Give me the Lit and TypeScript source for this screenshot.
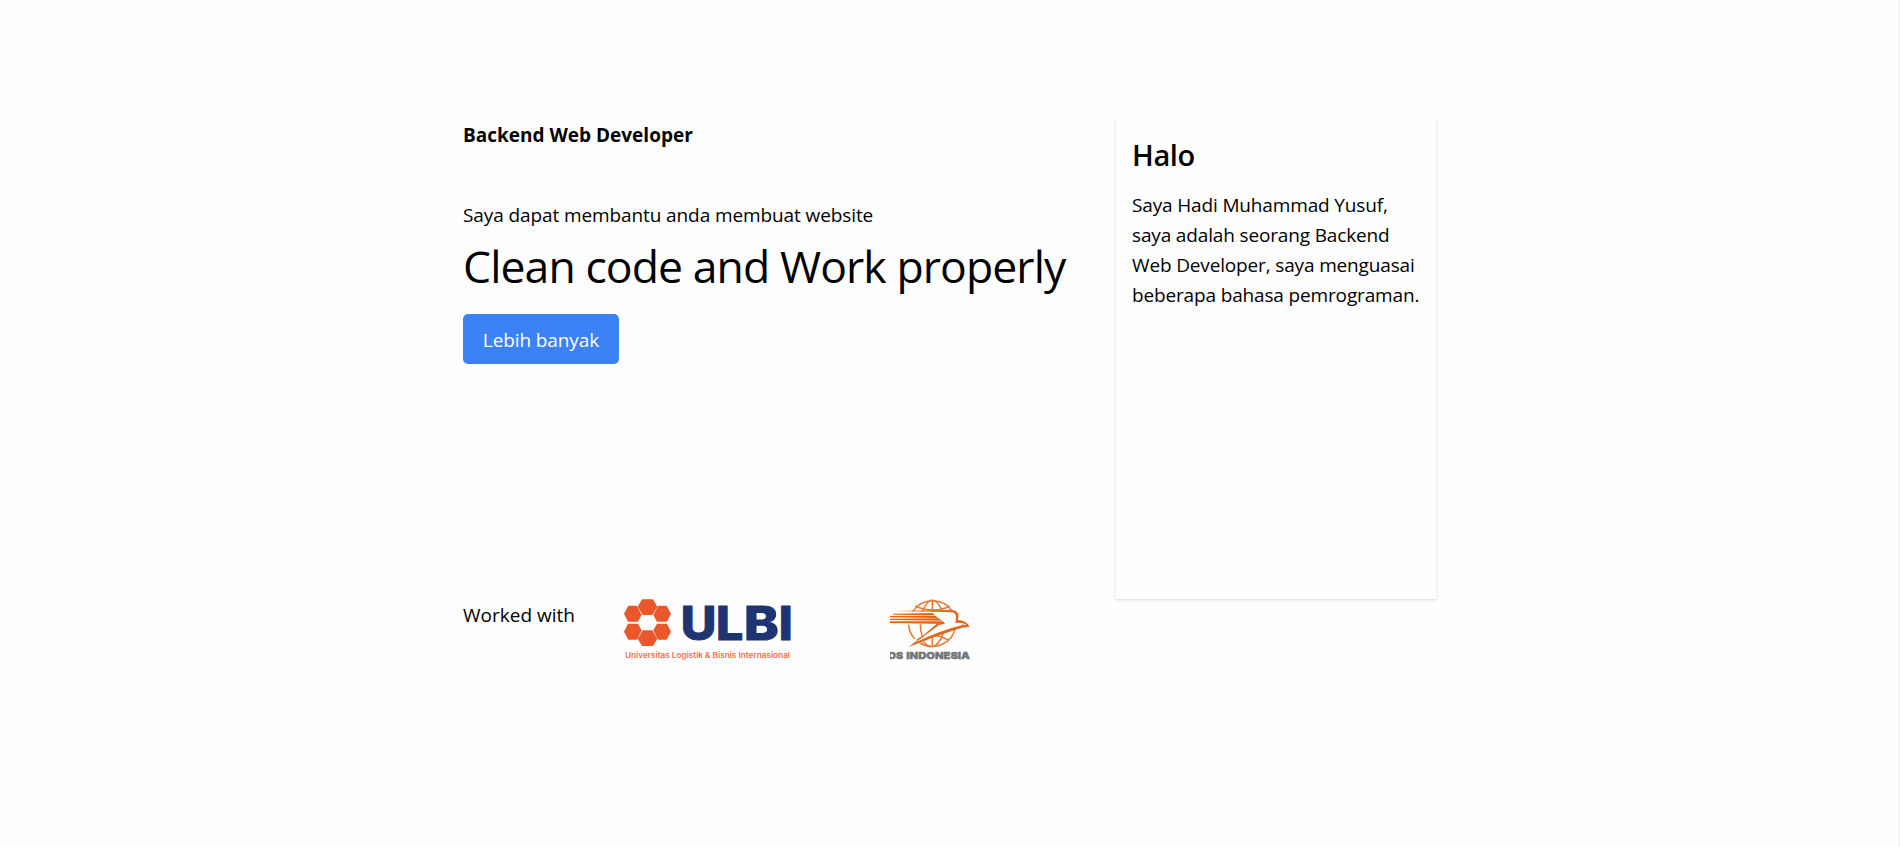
import { LitElement, html, css, svg } from "lit";
import { customElement } from "lit/decorators.js";

const PETALS = [
  "M60 7H93L106 29L91 54H62L47 29Z",
  "M62 100H91L106 125L93 147H60L47 125Z",
  "M6 50L19 26H45L59 54L48 74H18Z",
  "M147 50L134 26H108L94 54L105 74H135Z",
  "M6 104L19 128H45L59 100L48 80H18Z",
  "M147 104L134 128H108L94 100L105 80H135Z",
];

@customElement("brand-logos")
class BrandLogos extends LitElement {
  static styles = css`
    :host { display: flex; letter-spacing: 0; }
    .ulbi { display: block; width: 180px; height: 70px; overflow: visible; }
    .pos { display: block; width: 80px; height: 70px; margin-left: 90px; }
    .word { font: 800 46.5px Inter, sans-serif; fill: #1f3572; stroke: #1f3572; stroke-width: 1; stroke-linejoin: round; }
    .tag { font: 600 7.4px Inter, sans-serif; fill: #ee6f47; }
    .post { font: 900 28.5px Inter, sans-serif; fill: #737476; stroke: #737476; stroke-width: 1; }
  `;
  render() {
    return html`
      <svg class="ulbi" viewBox="620 599 180 70">
        <g transform="translate(622 597) scale(.33333)" fill="#e9572b">
          ${PETALS.map((d) => svg`<path d=${d}/>`)}
        </g>
        <g class="word">
          <text x="680.8" y="639.5" textLength="35.6" lengthAdjust="spacingAndGlyphs">U</text>
          <text x="716" y="639.5" textLength="27.3" lengthAdjust="spacingAndGlyphs">L</text>
          <text x="744" y="639.5" textLength="34.8" lengthAdjust="spacingAndGlyphs">B</text>
          <text x="778.8" y="639.5" textLength="14" lengthAdjust="spacingAndGlyphs">I</text>
        </g>
        <text class="tag" x="625" y="657.7" textLength="165" lengthAdjust="spacingAndGlyphs">Universitas Logistik &amp; Bisnis Internasional</text>
      </svg>
      <svg class="pos" viewBox="60 42 240 210">
        <g fill="none" stroke="#e57a35" stroke-width="4.5">
          <path d="M128 80A71 71 0 0 1 248 80M257 124A71 71 0 0 1 150 174M134 162A71 71 0 0 1 116 119"/>
          <path d="M187 43V79M187 155V185M157 79Q165 58 182 45M217 79Q209 58 192 45M151 118Q151 140 157 154M160 169Q169 182 182 185M221 133Q219 164 192 185M136 63Q160 75 187 75Q220 75 239 63M140 165Q187 138 234 165"/>
        </g>
        <path fill="#fefefe" d="M80 80H248Q264 84 263 96L262 108Q286 106 296 123L276 126Q220 139 121 183L214 117L60 114Z"/>
        <g fill="#e0661c">
          <path d="M78 78L250 75Q269 81 265 98L263 105Q286 104 299 125L277 128Q215 146 116 186L153 157L204 113L221 110L224 117L208 119L137 172Q215 135 275 121L289 120Q279 111 256 114Q260 96 256 88Q252 82 246 82Z"/>
          <path d="M69 86L188 84L195 91L69 89Z"/>
          <path d="M60 93L196 92L205 99L60 97Z"/>
          <path d="M60 101L207 100L216 107L60 105Z"/>
          <path d="M60 109L217 109L225 117L60 114Z"/>
        </g>
        <path d="M276 119L282 121" stroke="#e0661c" stroke-width="3"/>
        <text class="post" x="32" y="221" textLength="67" lengthAdjust="spacingAndGlyphs">POS</text>
        <text class="post" x="109" y="221" textLength="191" lengthAdjust="spacingAndGlyphs">INDONESIA</text>
      </svg>`;
  }
}

@customElement("app-root")
class AppRoot extends LitElement {
  static styles = css`
    :host {
      display: block; box-sizing: border-box; height: 847px; padding-top: 119px;
      border-right: 1px solid #ededed; background: #fefefe; color: #000;
      font: 19px/30px "Open Sans", "Noto Sans", sans-serif; letter-spacing: -.1px;
    }
    h1, h2, h3, p { margin: 0; font-weight: 400; white-space: nowrap; }
    .page { width: 973px; margin: 0 auto; }
    .hero { display: grid; grid-template-columns: 1fr 320px; height: 480px; }
    .intro { display: flex; flex-direction: column; align-items: flex-start; }
    .role { font-size: 19px; font-weight: 700; padding-top: 1px; letter-spacing: 0; }
    .lead { margin-top: 50px; }
    .title { font-size: 44.5px; line-height: 48px; margin-top: 12px; letter-spacing: -.9px; }
    .more {
      margin-top: 24px; width: 156px; height: 50px; border: 0; border-radius: 5px; padding: 2px 0 0;
      background: #3b82f6; color: #fff; font: inherit; letter-spacing: inherit; line-height: 48px;
    }
    .card {
      box-sizing: border-box; padding: 16px; background: #fefefe;
      box-shadow: 0 1px 3px rgba(0,0,0,.1), 0 1px 2px rgba(0,0,0,.06);
    }
    .hello { font-size: 29px; line-height: 40px; font-weight: 600; letter-spacing: -.4px; }
    .about { margin-top: 15px; letter-spacing: -.15px; }
    .partners { display: flex; align-items: flex-start; }
    .with { width: 157px; padding-top: 1px; letter-spacing: 0; }
  `;
  render() {
    return html`
      <div class="page">
        <div class="hero">
          <div class="intro">
            <h3 class="role">Backend Web Developer</h3>
            <p class="lead">Saya dapat membantu anda membuat website</p>
            <h1 class="title">Clean code and Work properly</h1>
            <button class="more">Lebih banyak</button>
          </div>
          <div class="card">
            <h2 class="hello">Halo</h2>
            <p class="about">Saya Hadi Muhammad Yusuf,<br>saya adalah seorang Backend<br>Web Developer, saya menguasai<br>beberapa bahasa pemrograman.</p>
          </div>
        </div>
        <div class="partners">
          <p class="with">Worked with</p>
          <brand-logos></brand-logos>
        </div>
      </div>`;
  }
}
